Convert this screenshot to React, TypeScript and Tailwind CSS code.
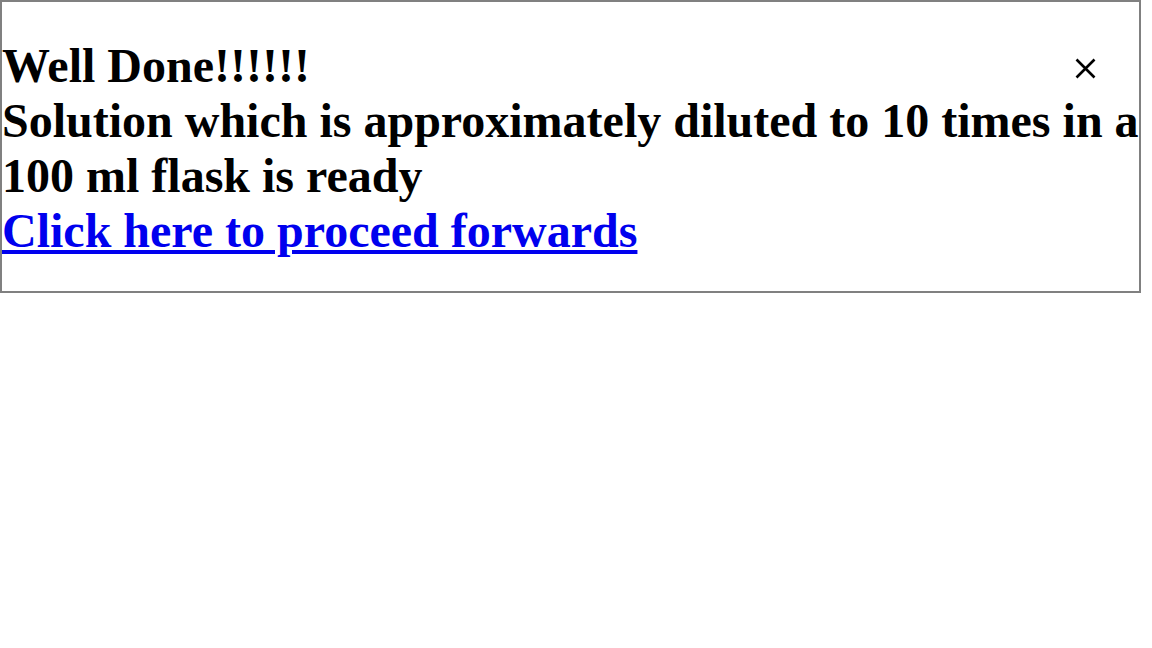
import React from 'react';

export default function App() {
  return (
    <div className="w-[1152px] h-[648px] bg-white" style={{ fontFamily: '"Liberation Serif", "Times New Roman", serif' }}>
      <div className="box-border w-[1141px] h-[293px] border-2 border-solid border-[#808080] bg-white pt-[36px] text-[48px] font-bold leading-[55px] text-black">
        <div className="flex items-center justify-between">
          <span>Well Done!!!!!!</span>
          <button className="mr-[43px] mt-[5px] flex h-[22px] w-[22px] items-center justify-center" aria-label="Close">
            <svg width="21" height="21" viewBox="0 0 21 21" fill="none" stroke="#000" strokeWidth="2.6" strokeLinecap="butt">
              <path d="M1.5 1.5L19.5 19.5M19.5 1.5L1.5 19.5" />
            </svg>
          </button>
        </div>
        <div>Solution which is approximately diluted to 10 times in a 100 ml flask is ready</div>
        <a href="#" className="text-[#0000ee] underline">
          Click here to proceed forwards
        </a>
      </div>
    </div>
  );
}
